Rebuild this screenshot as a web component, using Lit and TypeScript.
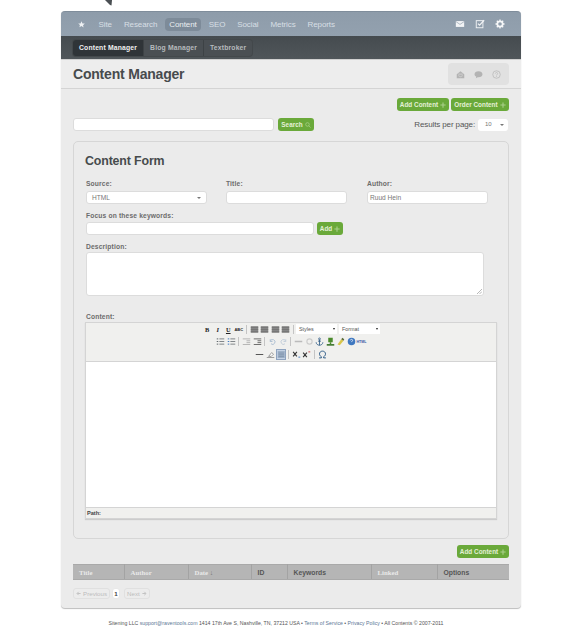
import { LitElement, html, css, svg } from "lit";
import { customElement } from "lit/decorators.js";

const plus = html`<svg class="plus" viewBox="0 0 8 8"><path d="M4 .5v7M.5 4h7" stroke="currentColor" stroke-width="1.5" fill="none"/></svg>`;

const ti = (d: unknown, cls = "") => html`<span class="ti ${cls}"><svg viewBox="0 0 12 12">${d}</svg></span>`;
const list = (dot: string) => svg`${[2.5, 6, 9.5].map((y) => svg`<path d="M1 ${y}H3" stroke="${dot}" stroke-width="1.3"/><path d="M4.5 ${y}H11" stroke="#5d6468" stroke-width="1"/>`)}`;
const align = svg`<rect x="1" y="1.5" width="10" height="9" fill="#8a8a8a"/><path d="M1 3.5h10M1 6h10M1 8.5h10" stroke="#666" stroke-width=".8"/>`;

@customElement("app-root")
export class AppRoot extends LitElement {
  static styles = css`
    :host { display: block; font-family: "Liberation Sans", Arial, sans-serif; background: #fff; color: #444; width: 581px; height: 640px; overflow: hidden; position: relative; }
    .pointer { position: absolute; left: 105px; top: 0; width: 8px; height: 6px; }
    .wrap { padding: 11px 60px 0 61px; }
    .shell { width: 460px; height: 597px; background: #ebebeb; border-radius: 4px; box-shadow: 0 1px 1px #bdbdbd; display: flex; flex-direction: column; }
    .nav { height: 25px; background: linear-gradient(#8e9caa, #93a1af); border-radius: 4px 4px 0 0; border-top: 1px solid #7f8d9b; box-sizing: border-box; display: flex; align-items: center; padding: 0 16px 0 17px; color: #d8dfe5; font-size: 8px; letter-spacing: -0.1px; }
    .star { width: 7px; height: 7px; margin-right: 9.5px; }
    .nav a { padding: 0 4px; height: 13px; line-height: 13px; margin-right: 4px; border-radius: 4px; white-space: nowrap; }
    .nav a.on { background: #7d8b99; color: #e9edf0; }
    .nav .right { margin-left: auto; display: flex; align-items: center; gap: 10px; }
    .nav .right svg { width: 10px; height: 10px; display: block; }
    .sub { height: 24px; background: linear-gradient(#454b4f, #50565a); border-bottom: 1px solid #d0d0d0; box-sizing: border-box; padding: 4px 12px; display: flex; align-items: flex-start; }
    .tabs { display: flex; height: 16px; background: #4a4f53; border-radius: 3px; box-shadow: 0 0 0 1px #43484b; font-size: 6.8px; font-weight: bold; letter-spacing: .17px; color: #b6babd; }
    .tabs span { padding: 0 6px; line-height: 15px; border-right: 1px solid #3d4245; white-space: nowrap; }
    .tabs span:last-child { border-right: 0; }
    .tabs span.on { background: #2f3438; color: #f0f0f0; border-radius: 3px 0 0 3px; }
    .head { height: 29px; box-sizing: border-box; border-bottom: 1px solid #d4d4d4; display: flex; align-items: center; justify-content: space-between; padding: 0 12px; background: #ededed; }
    h1 { margin: 0; font-size: 14px; font-weight: bold; color: #474b4d; letter-spacing: -0.2px; line-height: 18px; }
    .headicons { width: 61px; height: 22px; background: #e1e1e1; border-radius: 4px; display: flex; align-items: center; justify-content: space-around; padding: 0 4px; box-sizing: border-box; }
    .headicons svg { width: 9px; height: 9px; display: block; }
    .body { flex: 1; padding: 9px 12px 0; display: flex; flex-direction: column; }
    .btnrow { display: flex; justify-content: flex-end; gap: 2px; height: 13px; }
    .btn { flex: none; background: #6aa93a; color: #e4f0d8; border-radius: 3px; font-size: 6.4px; font-weight: bold; height: 13px; line-height: 13px; padding: 0 2px; display: inline-flex; align-items: center; justify-content: center; gap: 2px; box-sizing: border-box; white-space: nowrap; }
    .w52 { width: 52px; } .w58 { width: 58px; } .w36 { width: 36px; }
    .plus { flex: none; width: 6px; height: 6px; color: #a9d08a; }
    .searchrow { display: flex; align-items: center; height: 13px; margin-top: 7px; }
    .field { background: #fff; border: 1px solid #dcdcdc; border-radius: 3px; box-sizing: border-box; height: 13px; font-size: 6.6px; color: #777; padding: 0 5px; line-height: 11px; display: flex; align-items: center; justify-content: space-between; }
    .field.au { padding-left: 2px; margin-left: 1px; }
    .au-l { margin-left: 1px; }
    .searchrow .q { width: 201px; margin-right: 4px; }
    .results { margin-left: auto; font-size: 8px; color: #555; letter-spacing: -0.12px; margin-right: 3px; }
    .mini { width: 30px; height: 12px; padding: 0 4px 0 7px; border: 0; font-size: 6px; margin-right: 1px; }
    .caret { width: 0; height: 0; border: 2.2px solid transparent; border-top: 2.5px solid #777; border-bottom: 0; }
    .panel { margin-top: 10px; height: 398px; box-sizing: border-box; border: 1px solid #d6d6d6; border-radius: 5px; padding: 12px 11px 0 11px; }
    h2 { margin: 0; font-size: 12.4px; font-weight: bold; color: #474b4d; letter-spacing: -0.15px; line-height: 15px; }
    label { display: block; font-size: 6.7px; font-weight: bold; color: #6c6c6c; letter-spacing: .15px; line-height: 8px; }
    .three { display: grid; grid-template-columns: 121px 121px 121px; column-gap: 19px; margin-top: 11px; padding-left: 1px; }
    .three .field { width: 121px; margin-top: 3px; }
    .kwl { margin: 8px 0 0 1px; }
    .kw { display: flex; align-items: center; margin: 2px 0 0 1px; gap: 3px; }
    .kw .field { width: 228px; }
    .kw .btn { width: 26px; }
    .dl { margin: 8px 0 0 1px; }
    .ta { width: 398px; height: 44px; margin: 1px 0 0 1px; background: #fff; border: 1px solid #dcdcdc; border-radius: 3px; box-sizing: border-box; position: relative; }
    .grip { position: absolute; right: 1px; bottom: 1px; width: 5px; height: 5px; }
    .cl { margin: 17px 0 0 1px; }
    .editor { width: 412px; height: 197px; margin-top: 1px; border: 1px solid #d4d4d4; box-sizing: border-box; background: #f0f0ee; display: flex; flex-direction: column; box-shadow: 0 1px 1px #ccc; }
    .toolbar { height: 38px; display: flex; flex-direction: column; align-items: center; }
    .tr { display: flex; align-items: center; height: 12.6px; }
    .ti { flex: none; width: 10.5px; height: 10.5px; display: inline-flex; align-items: center; justify-content: center; box-sizing: border-box; }
    .ti svg { width: 9px; height: 9px; display: block; }
    .ti.act { background: #c6d4e6; border: 1px solid #8ea3bf; }
    .ti.t { font-size: 6.4px; font-weight: bold; font-family: "Liberation Serif", serif; color: #222; }
    .ti.i { font-style: italic; } .ti.u { text-decoration: underline; }
    .ti.abc { font-size: 4px; font-family: "Liberation Sans", sans-serif; }
    .ti.hl { font-size: 3.6px; font-weight: bold; color: #3858a8; }
    .sep { width: 1px; height: 9px; background: #c4c4c4; margin: 0 2px; }
    .dd { width: 41px; height: 10px; background: #fff; font-size: 5.4px; color: #555; display: flex; align-items: center; justify-content: space-between; padding: 0 2px 0 3px; box-sizing: border-box; }
    .dd + .dd { margin-left: 2px; }
    .dd i { width: 0; height: 0; border: 1.5px solid transparent; border-top: 2px solid #222; border-bottom: 0; }
    .edit { flex: 1; background: #fff; border-top: 1px solid #d4d4d4; border-bottom: 1px solid #d4d4d4; }
    .path { height: 10px; font-size: 5.6px; font-weight: bold; color: #444; line-height: 10px; padding-left: 1px; }
    .foot-btn { display: flex; justify-content: flex-end; margin-top: 6px; }
    table { width: 436px; margin-top: 6px; border-collapse: collapse; table-layout: fixed; height: 15px; background: #b5b5b5; box-shadow: 0 1px 0 #a9a9a9; border-top: 1px solid #a9a9a9; box-sizing: border-box; }
    col.c1 { width: 51px; } col.c2 { width: 64px; } col.c3 { width: 63px; } col.c4 { width: 36px; } col.c5 { width: 84px; } col.c6 { width: 66px; }
    th { padding: 0 0 0 6px; text-align: left; font-size: 6.8px; font-weight: bold; height: 14px; border-right: 1px solid #a3a3a3; color: #e9e9e9; font-family: "Liberation Serif", serif; overflow: hidden; white-space: nowrap; }
    th:last-child { border-right: 0; }
    th.dk { font-family: "Liberation Sans", sans-serif; color: #555; }
    .sortm { color: #777; }
    .pager { display: flex; align-items: center; gap: 2px; margin-top: 9px; font-size: 6.2px; color: #bcbcbc; }
    .pg { height: 11px; border: 1px solid #e0e0e0; border-radius: 3px; box-sizing: border-box; line-height: 9px; display: flex; align-items: center; gap: 2px; padding: 0 2px; background: #ececec; white-space: nowrap; }
    .pg svg { flex: none; width: 5px; height: 5px; display: block; }
    .pg.cur { background: #fff; color: #444; font-weight: bold; width: 8px; justify-content: center; padding: 0; border-color: #e8e8e8; margin-right: 2px; }
    footer { margin: 11px 30px 0 0; text-align: center; font-size: 5.2px; color: #555; line-height: 8px; white-space: nowrap; }
    footer a { color: #5c7796; }
  `;

  render() {
    const arrowL = html`<svg viewBox="0 0 6 6"><path d="M5.5 3H1.5M3.2 1L1.2 3l2 2" stroke="#c2c2c2" stroke-width="1.2" fill="none"/></svg>`;
    const arrowR = html`<svg viewBox="0 0 6 6"><path d="M.5 3h4M2.8 1l2 2-2 2" stroke="#c2c2c2" stroke-width="1.2" fill="none"/></svg>`;
    return html`
      <svg class="pointer" viewBox="0 0 8 6"><path d="M0 0H7L6.5 5.5 5 5Z" fill="#4a4f53"/></svg>
      <div class="wrap">
        <div class="shell">
          <div class="nav">
            <svg class="star" viewBox="0 0 10 10"><path d="M5 .3l1.4 3.1 3.3.3-2.5 2.2.8 3.3L5 7.2 2 8.9l.8-3.3L.3 3.7l3.3-.3z" fill="#eef1f3"/></svg>
            <a>Site</a><a>Research</a><a class="on">Content</a><a>SEO</a><a>Social</a><a>Metrics</a><a>Reports</a>
            <div class="right">
              <svg viewBox="0 0 12 12"><rect x="1" y="2.5" width="10" height="7" fill="#f2f4f6"/><path d="M1 3l5 3.5L11 3" stroke="#8f9dab" fill="none" stroke-width=".8"/></svg>
              <svg viewBox="0 0 12 12"><rect x="1.5" y="2" width="8" height="8.5" fill="none" stroke="#f2f4f6" stroke-width="1.1"/><path d="M3.5 5.5l2 2L11 1.5" stroke="#f2f4f6" fill="none" stroke-width="1.4"/></svg>
              <svg viewBox="0 0 12 12"><circle cx="6" cy="6" r="3.2" fill="none" stroke="#f6f7f8" stroke-width="2"/><path d="M6 .6v2M6 9.4v2M.6 6h2M9.4 6h2M2.2 2.2l1.4 1.4M8.4 8.4l1.4 1.4M9.8 2.2L8.4 3.6M3.6 8.4L2.2 9.8" stroke="#f6f7f8" stroke-width="1.6"/></svg>
            </div>
          </div>
          <div class="sub">
            <div class="tabs"><span class="on">Content Manager</span><span>Blog Manager</span><span>Textbroker</span></div>
          </div>
          <div class="head">
            <h1>Content Manager</h1>
            <div class="headicons">
              <svg viewBox="0 0 12 12"><path d="M1 5.5L6 1.5l5 4V11H1z" fill="#b3b3b3"/><path d="M3 5.5h6M3 7.5l3 1.5 3-1.5" stroke="#e1e1e1" fill="none" stroke-width=".8"/></svg>
              <svg viewBox="0 0 12 12"><path d="M6 1.5c3 0 5.3 1.7 5.3 4S9 9.5 6 9.5l-1 0L2.5 11l.5-2.2C1.6 8 .7 6.9.7 5.5c0-2.3 2.3-4 5.3-4z" fill="#b3b3b3"/></svg>
              <svg viewBox="0 0 12 12"><circle cx="6" cy="6" r="5" fill="none" stroke="#b8b8b8"/><path d="M4.5 4.8c0-2 3-2 3 0 0 1.1-1.5 1.1-1.5 2.5M6 8.3v1" stroke="#b8b8b8" fill="none"/></svg>
            </div>
          </div>
          <div class="body">
            <div class="btnrow">
              <span class="btn w52">Add Content ${plus}</span>
              <span class="btn w58">Order Content ${plus}</span>
            </div>
            <div class="searchrow">
              <div class="field q"></div>
              <span class="btn w36">Search
                <svg class="plus" viewBox="0 0 8 8"><circle cx="3.3" cy="3.3" r="2.4" fill="none" stroke="currentColor"/><path d="M5 5l2.4 2.4" stroke="currentColor"/></svg>
              </span>
              <span class="results">Results per page:</span>
              <div class="field mini">10<span class="caret"></span></div>
            </div>
            <div class="panel">
              <h2>Content Form</h2>
              <div class="three">
                <div><label>Source:</label><div class="field">HTML<span class="caret"></span></div></div>
                <div><label>Title:</label><div class="field"></div></div>
                <div><label class="au-l">Author:</label><div class="field au">Ruud Hein</div></div>
              </div>
              <label class="kwl">Focus on these keywords:</label>
              <div class="kw"><div class="field"></div><span class="btn">Add ${plus}</span></div>
              <label class="dl">Description:</label>
              <div class="ta"><svg class="grip" viewBox="0 0 5 5"><path d="M5 0L0 5M5 2.5L2.5 5" stroke="#888" stroke-width=".6"/></svg></div>
              <label class="cl">Content:</label>
              <div class="editor">
                <div class="toolbar">
                  <div class="tr">
                    <span class="ti t">B</span><span class="ti t i">I</span><span class="ti t u">U</span><span class="ti t abc">ABC</span>
                    <span class="sep"></span>
                    ${[0, 1, 2, 3].map(() => ti(align))}
                    <span class="sep"></span>
                    <div class="dd">Styles<i></i></div><div class="dd">Format<i></i></div>
                  </div>
                  <div class="tr">
                    ${ti(list("#5d6468"))}${ti(list("#3f78c0"))}
                    <span class="sep"></span>
                    ${ti(svg`<path d="M1 2.5h10M6 5h5M6 7.5h5M1 10h10" stroke="#aaa" stroke-width="1.1"/>`)}${ti(svg`<path d="M1 2.5h10M6 5h5M6 7.5h5M1 10h10" stroke="#555" stroke-width="1.1"/>`)}
                    <span class="sep"></span>
                    ${ti(svg`<path d="M3 6a3.2 3.2 0 1 1 1 3M3 3v3h3" stroke="#a9bcd0" fill="none" stroke-width="1.2"/>`)}${ti(svg`<path d="M9 6a3.2 3.2 0 1 0-1 3M9 3v3H6" stroke="#c0ccd8" fill="none" stroke-width="1.2"/>`)}
                    <span class="sep"></span>
                    ${ti(svg`<path d="M1 6h10" stroke="#bbb" stroke-width="2"/>`)}${ti(svg`<circle cx="6" cy="6" r="3.5" fill="none" stroke="#ccc" stroke-width="1.5"/>`)}
                    ${ti(svg`<circle cx="6" cy="2.5" r="1.2" fill="none" stroke="#2c5a86"/><path d="M6 3.5V11M1.5 7c0 2.5 2.5 4 4.5 4s4.5-1.5 4.5-4M4 5.5h4" stroke="#2c5a86" fill="none" stroke-width="1.1"/>`)}
                    ${ti(svg`<rect x="3" y="1" width="6" height="6" fill="#4a8a2c"/><path d="M1 10.5h10" stroke="#2d6a1c" stroke-width="2"/><path d="M6 7v3" stroke="#4a8a2c" stroke-width="2"/>`)}
                    ${ti(svg`<path d="M2 10l5-7 3 2-5 6z" fill="#d9c64a"/><path d="M7 3l1.5-2 2.5 2-1 2z" fill="#5a6a3a"/>`)}
                    ${ti(svg`<circle cx="6" cy="6" r="5" fill="#3f78c0"/><path d="M4.5 4.5c0-1.8 3-1.8 3 0 0 1-1.5 1-1.5 2.3" stroke="#fff" fill="none"/>`)}
                    <span class="ti hl">HTML</span>
                  </div>
                  <div class="tr">
                    ${ti(svg`<path d="M1 6h10" stroke="#444" stroke-width="1.2"/>`)}
                    ${ti(svg`<path d="M1 10h10M3.5 8.5l4-5 2.5 2-3 3z" stroke="#666" fill="#fff" stroke-width=".8"/>`)}
                    ${ti(svg`<rect x="1" y="1" width="10" height="10" fill="#9fb2c8"/><path d="M2 9h8M2 6.5h8M2 4h8" stroke="#6d829b" stroke-width=".8"/>`, "act")}
                    <span class="sep"></span>
                    ${ti(svg`<path d="M1.5 2.5l5 6M6.5 2.5l-5 6" stroke="#333" stroke-width="1.5"/><path d="M8.5 9.5h2.5" stroke="#3f78c0" stroke-width="1.2"/>`)}
                    ${ti(svg`<path d="M1.5 3.5l5 6M6.5 3.5l-5 6" stroke="#333" stroke-width="1.5"/><path d="M8.5 2.5h2.5" stroke="#c04040" stroke-width="1.2"/>`)}
                    <span class="sep"></span>
                    ${ti(svg`<path d="M1.5 10.5h3V9C2.8 8 2 6.8 2 5.2 2 3 3.7 1.5 6 1.5S10 3 10 5.2C10 6.8 9.2 8 7.5 9v1.5h3" stroke="#2c5a86" fill="none" stroke-width="1.3"/>`)}
                  </div>
                </div>
                <div class="edit"></div>
                <div class="path">Path:</div>
              </div>
            </div>
            <div class="foot-btn"><span class="btn w52">Add Content ${plus}</span></div>
            <table>
              <colgroup><col class="c1"/><col class="c2"/><col class="c3"/><col class="c4"/><col class="c5"/><col class="c6"/><col/></colgroup>
              <tr>
                <th>Title</th><th>Author</th><th>Date <span class="sortm">↓</span></th><th class="dk">ID</th><th class="dk">Keywords</th><th>Linked</th><th class="dk">Options</th>
              </tr>
            </table>
            <div class="pager">
              <span class="pg">${arrowL}Previous</span>
              <span class="pg cur">1</span>
              <span class="pg">Next ${arrowR}</span>
            </div>
          </div>
        </div>
        <footer>Sitening LLC <a>support@raventools.com</a> 1414 17th Ave S, Nashville, TN, 37212 USA • <a>Terms of Service</a> • <a>Privacy Policy</a> • All Contents © 2007-2011</footer>
      </div>
    `;
  }
}
